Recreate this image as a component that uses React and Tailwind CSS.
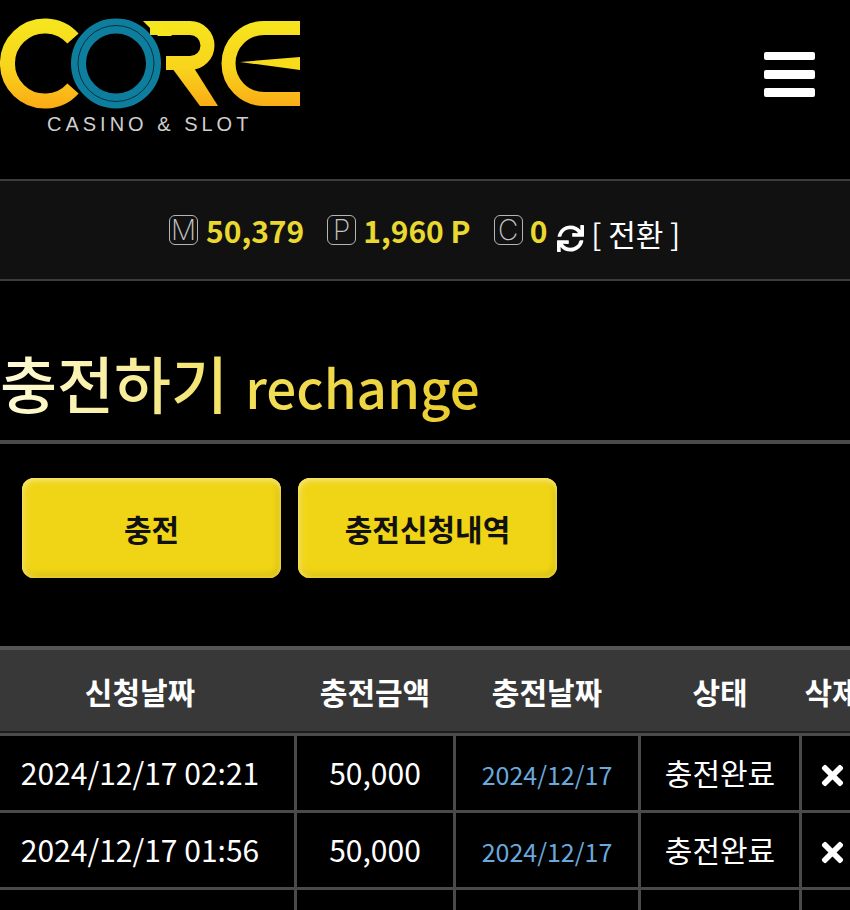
import { FaSync, FaTimes } from 'react-icons/fa'

const font = { fontFamily: '"Noto Sans CJK KR", "Noto Sans", sans-serif' }

const rows = [
  { requested: '2024/12/17 02:21', amount: '50,000', date: '2024/12/17', status: '충전완료' },
  { requested: '2024/12/17 01:56', amount: '50,000', date: '2024/12/17', status: '충전완료' },
]

const columns = 'grid grid-cols-[294px_156px_182px_158px_60px] gap-x-[3px] w-[862px]'

function Logo() {
  return (
    <div className="w-[300px]">
      <svg width="300" height="112" viewBox="0 0 300 112" className="block">
        <defs>
          <linearGradient id="gold" x1="0" y1="19" x2="0" y2="108" gradientUnits="userSpaceOnUse">
            <stop offset="0" stopColor="#f6e61e" />
            <stop offset="0.55" stopColor="#f8d41c" />
            <stop offset="1" stopColor="#fbaa16" />
          </linearGradient>
        </defs>
        <g fill="none" stroke="url(#gold)" strokeWidth="14">
          <path d="M73 38.6 A37.5 37.5 0 1 0 73 88.4" strokeWidth="15" />
          <path d="M150 28 H190 A17.5 17.5 0 0 1 190 63 H166" />
          <path d="M300 28 H264 A35.5 35.5 0 0 0 264 99 H300" />
        </g>
        <path d="M143 21 H160 L172 36 H158 Z" fill="#f6e61e" />
        <path d="M172 68 H194 L218 106 H200 Z" fill="url(#gold)" />
        <path d="M240 62 L300 57 V70 Z" fill="#f8dc1c" />
        <circle cx="116" cy="63.5" r="37.5" fill="#000" stroke="#0e7e9e" strokeWidth="15" />
        <circle cx="116" cy="63.5" r="38" fill="none" stroke="#07303d" strokeWidth="1" />
      </svg>
      <div
        className="mt-px pl-[47px] text-[20px] leading-[23px] tracking-[4px] whitespace-nowrap text-[#cfcfcf]"
        style={{ fontFamily: '"Liberation Sans", sans-serif' }}
      >
        CASINO &amp; SLOT
      </div>
    </div>
  )
}

function Badge({ letter, className = '' }) {
  return (
    <span
      className={`flex h-[30px] w-[29px] items-center justify-center rounded-[6px] border border-[#b5b5b5] text-[28px] leading-none font-extralight text-[#c4c4c4] ${className}`}
      style={{ fontFamily: 'Inter, sans-serif' }}
    >
      {letter}
    </span>
  )
}

export default function App() {
  return (
    <div className="h-[910px] w-[850px] overflow-hidden bg-black" style={font}>
      <header className="flex h-[179px] items-start justify-between pr-[35px]">
        <Logo />
        <div className="mt-[52px] flex w-[51px] flex-col gap-[9.5px]">
          <span className="h-[8px] rounded-[2px] bg-white" />
          <span className="h-[9px] rounded-[2px] bg-white" />
          <span className="h-[9px] rounded-[2px] bg-white" />
        </div>
      </header>

      <div className="flex h-[102px] items-center border-y-2 border-[#3c3c3c] bg-[#111111] pl-[169px] text-[30px] leading-none">
        <Badge letter="M" />
        <span className="ml-[8px] font-bold text-[#e9d82f]">50,379</span>
        <Badge letter="P" className="ml-[23px]" />
        <span className="ml-[7px] font-bold text-[#e9d82f]">1,960 P</span>
        <Badge letter="C" className="ml-[23px]" />
        <span className="ml-[7px] font-bold text-[#e9d82f]">0</span>
        <FaSync className="mt-[16px] ml-[10px] text-white" size={27} />
        <span className="mt-[6px] ml-[7px] text-white">[ 전환 ]</span>
      </div>

      <div className="flex h-[163px] items-end border-b-4 border-[#4a4a4a] pb-[12px]">
        <h1 className="inline-flex items-baseline gap-[17px] bg-linear-to-r from-[#fffbd8] via-[#f3e05a] to-[#e9cb28] bg-clip-text leading-[84px] font-medium text-transparent">
          <span className="text-[62px]">충전하기</span>
          <span className="text-[53px]">rechange</span>
        </h1>
      </div>

      <div className="mt-[34px] flex gap-[17px] pl-[22px]">
        {['충전', '충전신청내역'].map((label) => (
          <button
            key={label}
            className="h-[100px] w-[259px] rounded-[12px] bg-[#f0d516] text-[30px] font-bold text-[#111] shadow-[inset_0_3px_5px_#f8e56a,inset_3px_0_6px_#f4df50,inset_-3px_0_6px_#d8be14,inset_0_-4px_6px_#d4ba12]"
          >
            {label}
          </button>
        ))}
      </div>

      <div className="mt-[68px] overflow-hidden">
        <div className={`${columns} h-[85px] items-center border-t-4 border-[#555555] bg-[#383838] pt-[2px] text-center text-[30px] font-bold text-white`}>
          <div className="pr-[14px]">신청날짜</div>
          <div>충전금액</div>
          <div>충전날짜</div>
          <div>상태</div>
          <div>삭제</div>
        </div>
        <div className="h-[2px] bg-[#1c1c1c]" />
        <div className="flex flex-col gap-y-[3px] border-t-[3px] border-[#4a4a4a] bg-[#4a4a4a]">
          {rows.map((row) => (
            <div key={row.requested} className={`${columns} text-center text-[30px] text-white`}>
              <div className="flex h-[74px] items-center justify-center bg-black pr-[14px] pb-[2px]">{row.requested}</div>
              <div className="flex h-[74px] items-center justify-center bg-black pb-[2px]">{row.amount}</div>
              <div className="flex h-[74px] items-center justify-center bg-black pt-[4px] text-[25px] text-[#6aa9dc]">{row.date}</div>
              <div className="flex h-[74px] items-center justify-center bg-black pb-[2px] text-[30px]">{row.status}</div>
              <div className="flex h-[74px] items-center justify-center bg-black pt-[4px]">
                <FaTimes size={31} />
              </div>
            </div>
          ))}
          <div className={columns}>
            <div className="h-[74px] bg-black" />
            <div className="h-[74px] bg-black" />
            <div className="h-[74px] bg-black" />
            <div className="h-[74px] bg-black" />
            <div className="h-[74px] bg-black" />
          </div>
        </div>
      </div>
    </div>
  )
}
